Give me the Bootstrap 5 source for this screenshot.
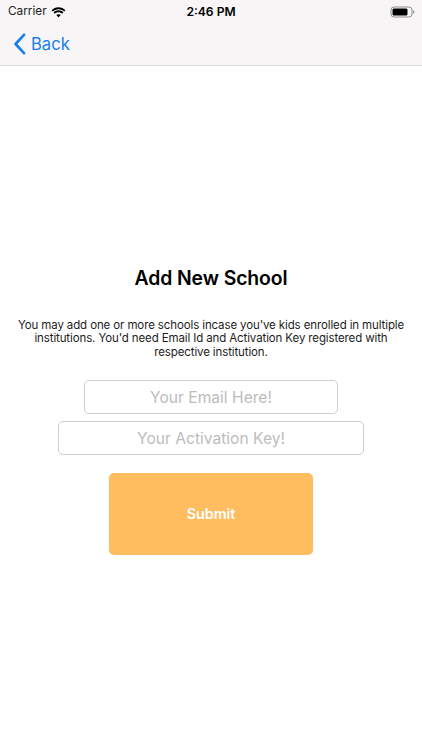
<!DOCTYPE html>
<html lang="en">
<head>
<meta charset="utf-8">
<title>Add New School</title>
<link href="https://cdn.jsdelivr.net/npm/bootstrap@5.3.0/dist/css/bootstrap.min.css" rel="stylesheet">
<style>
html,body{height:100%;}
body{font-family:Inter,"Liberation Sans",sans-serif;background:#fff;color:#000;overflow:hidden;}
.topbar{background:#f7f5f6;border-bottom:1px solid #dcdbdc;height:66px;}
.statusline{height:23px;padding:1px 7px 0 8px;position:relative;}
.carrier{color:#1c1c1c;font-size:11.8px;}
.clock{font-size:12.1px;font-weight:600;position:absolute;left:0;right:0;text-align:center;}
.backline{height:42px;padding-left:13px;color:#1a7fe8;font-size:16.6px;gap:5px;}
.page-title{font-size:19.4px;font-weight:600;line-height:24px;margin:200px 0 0;letter-spacing:-.1px;}
.intro{font-size:11.5px;line-height:13.4px;letter-spacing:-.12px;color:#1c1c1c;margin:29px 0 0;padding:0 12px;}
.field{height:34px;min-height:0;border:1px solid #cfcfcf;border-radius:5px;font-size:15.6px;text-align:center;padding:0;color:#222;}
.field::placeholder{color:#bcbcbc;opacity:1;}
.field-email{width:254px;margin-top:21px;}
.field-key{width:306px;margin-top:7px;}
.submit-btn{width:204px;height:82px;margin-top:18px;padding:0 0 1px;background:#ffbd60;border:0;border-radius:5px;color:#fff;font-size:14.3px;font-weight:600;}
</style>
</head>
<body>
<header class="topbar">
  <div class="statusline d-flex align-items-center justify-content-between">
    <div class="d-flex align-items-center gap-1">
      <span class="carrier">Carrier</span>
      <svg width="15" height="11" viewBox="0 0 15 11" aria-hidden="true"><path d="M7.5 2.3c2.2 0 4.2.9 5.6 2.3l1.3-1.4C12.6 1.3 10.2.2 7.5.2S2.4 1.3.6 3.2l1.3 1.4C3.3 3.2 5.3 2.3 7.5 2.3z" fill="#000"/><path d="M7.5 5.2c1.4 0 2.7.5 3.6 1.5l1.3-1.4C11.1 4 9.4 3.2 7.5 3.2S3.9 4 2.6 5.3l1.3 1.4c.9-1 2.2-1.5 3.6-1.5z" fill="#000"/><path d="M7.5 7.2c-.9 0-1.7.4-2.2.9l2.2 2.4 2.2-2.4c-.5-.5-1.3-.9-2.2-.9z" fill="#000"/></svg>
    </div>
    <span class="clock">2:46 PM</span>
    <svg width="25" height="12" viewBox="0 0 25 12" aria-hidden="true"><rect x="1" y="1" width="21" height="10" rx="3" fill="none" stroke="#8e8e8e" stroke-width="1"/><rect x="2.5" y="2.5" width="15" height="7" rx="1.5" fill="#000"/><path d="M23.5 4.5c.7.3.7 2.7 0 3z" fill="#8e8e8e" stroke="#8e8e8e" stroke-width=".6"/></svg>
  </div>
  <div class="backline d-flex align-items-center">
    <svg width="13" height="22" viewBox="0 0 13 22" aria-hidden="true"><path d="M11 1.8 2.6 11l8.4 9.2" fill="none" stroke="#1a7fe8" stroke-width="2.7" stroke-linecap="round" stroke-linejoin="round"/></svg>
    <span>Back</span>
  </div>
</header>
<main class="d-flex flex-column align-items-center text-center">
  <h1 class="page-title">Add New School</h1>
  <p class="intro">You may add one or more schools incase you've kids enrolled in multiple institutions. You'd need Email Id and Activation Key registered with respective institution.</p>
  <input class="form-control field field-email" type="email" placeholder="Your Email Here!">
  <input class="form-control field field-key" type="text" placeholder="Your Activation Key!">
  <button class="btn submit-btn" type="button">Submit</button>
</main>
<script src="https://cdn.jsdelivr.net/npm/bootstrap@5.3.0/dist/js/bootstrap.bundle.min.js"></script>
</body>
</html>
